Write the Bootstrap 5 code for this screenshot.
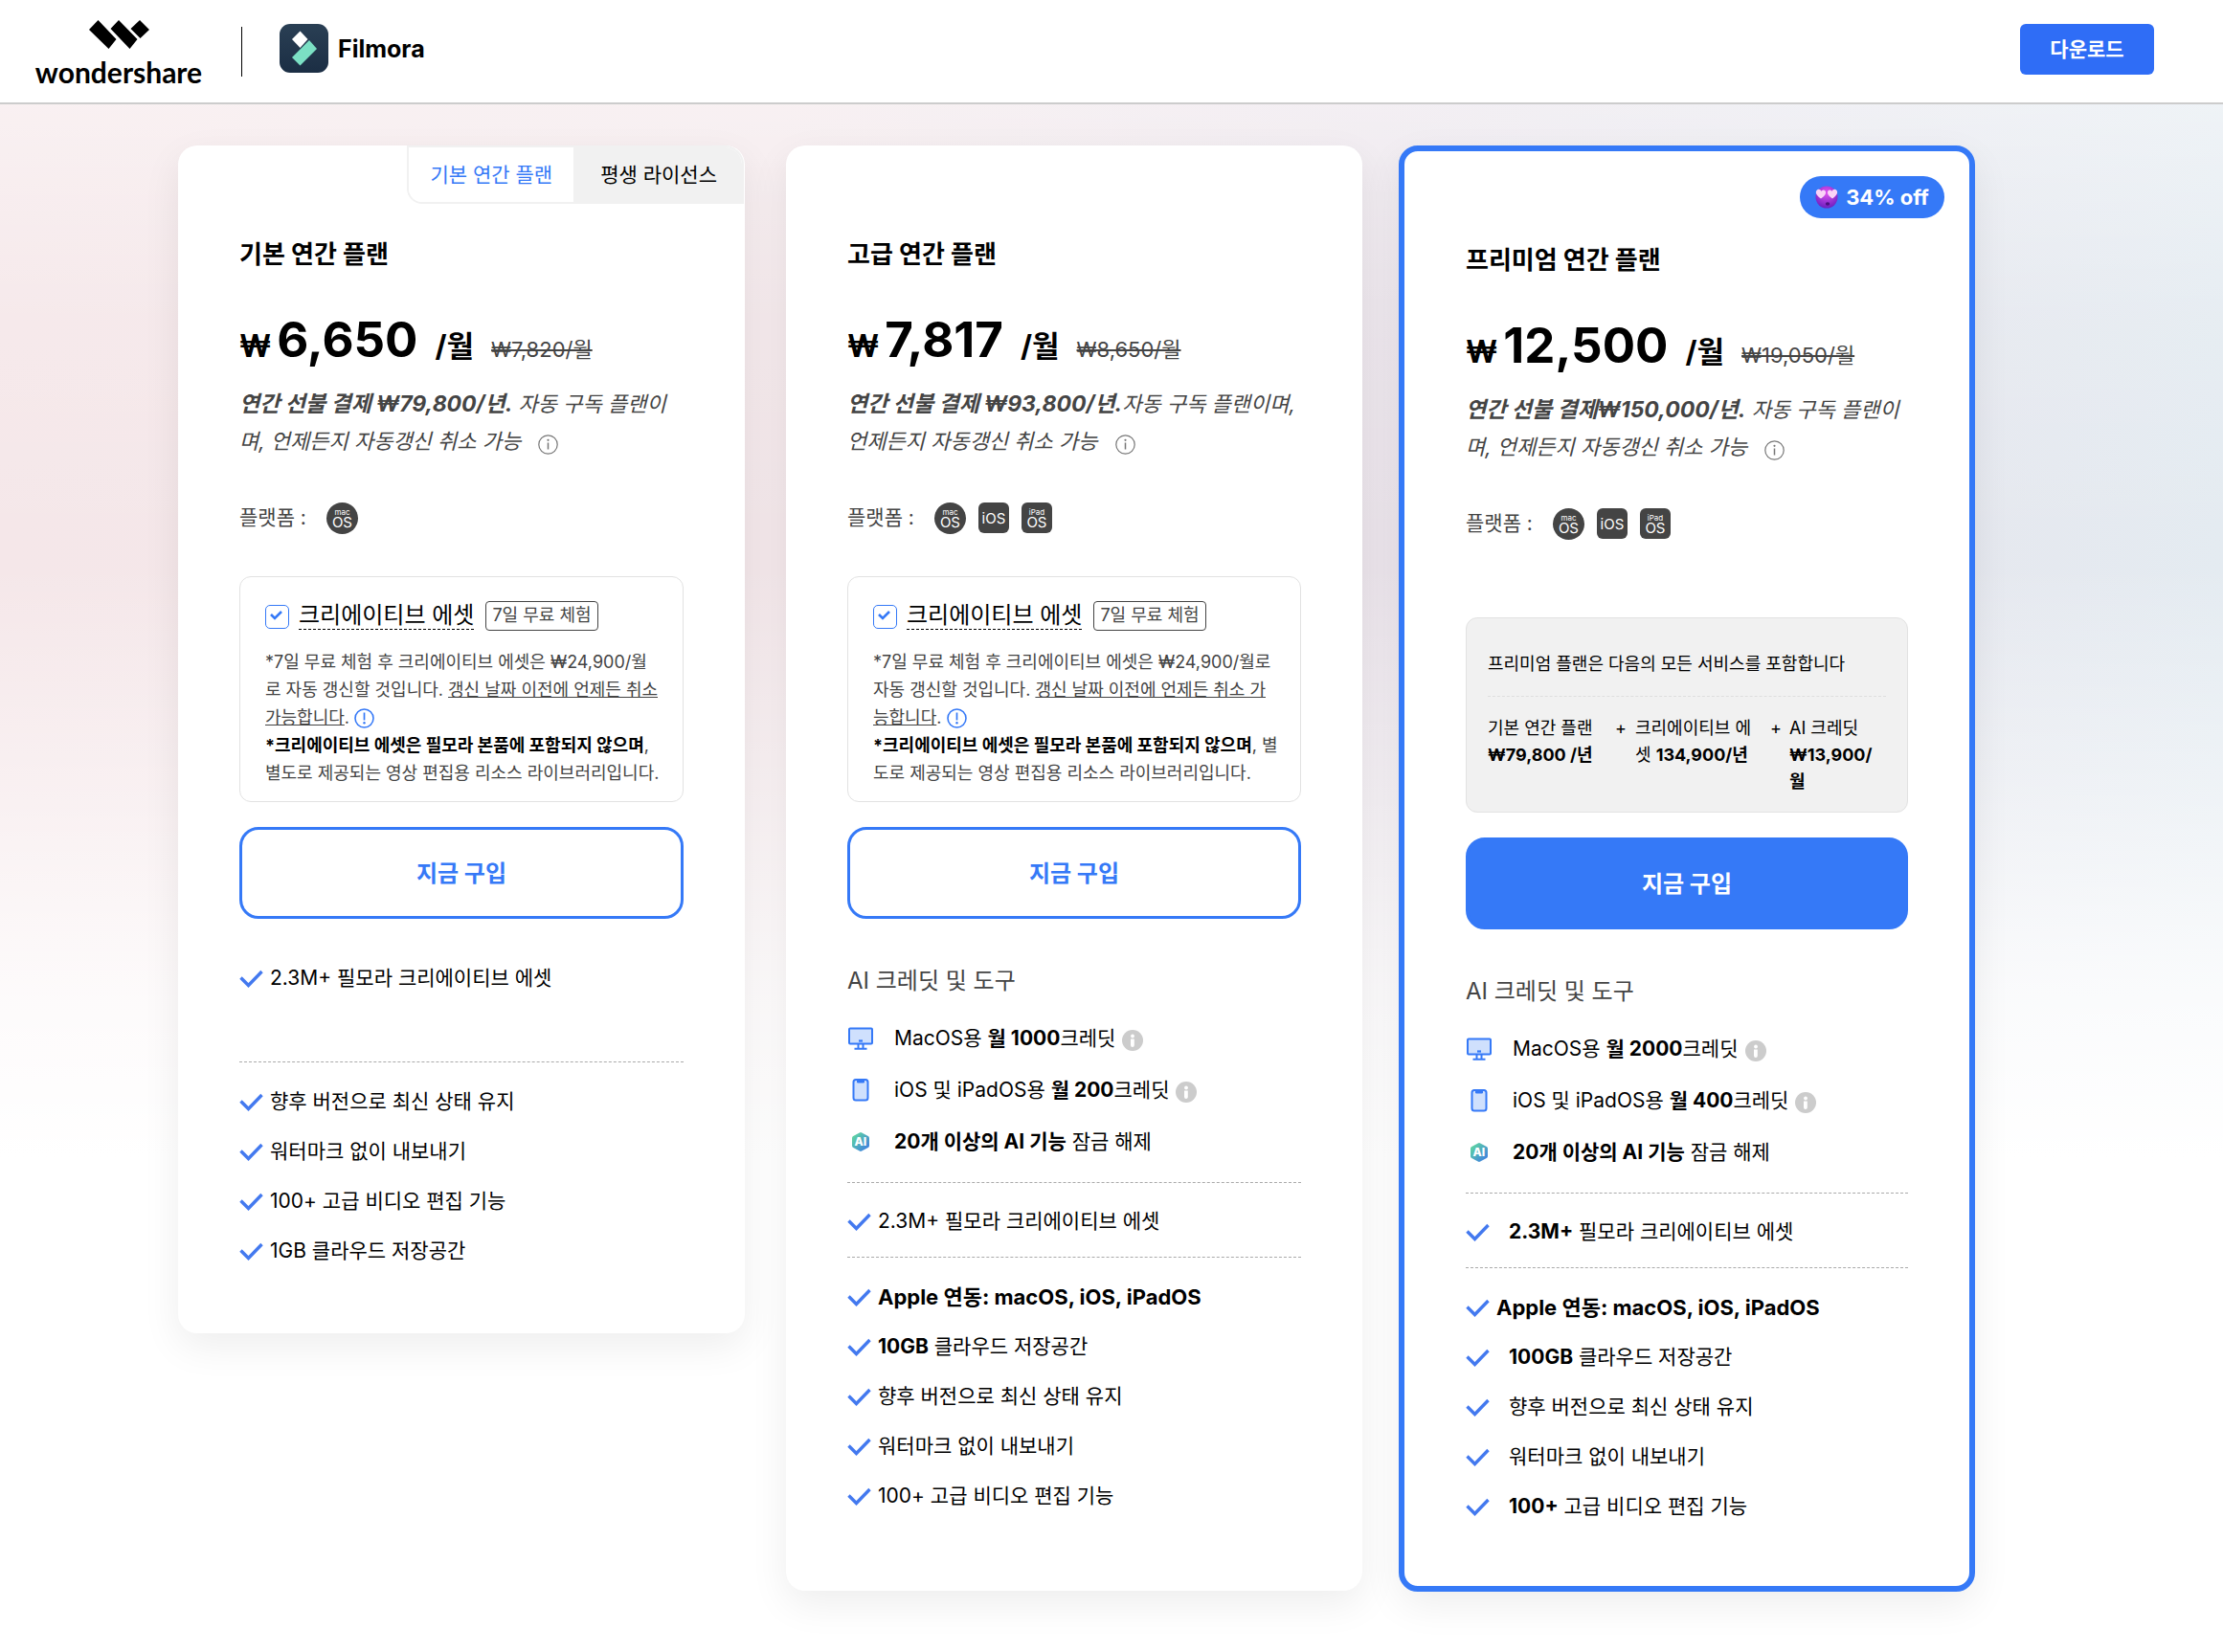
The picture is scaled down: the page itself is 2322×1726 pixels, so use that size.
<!DOCTYPE html>
<html lang="ko">
<head>
<meta charset="utf-8">
<meta name="viewport" content="width=device-width, initial-scale=1">
<title>Filmora 요금제</title>
<link href="https://cdn.jsdelivr.net/npm/bootstrap@5.3.0/dist/css/bootstrap.min.css" rel="stylesheet">
<style>
:root{--brand:#3579f7;--ink:#444}
body{font-family:Inter,"Noto Sans CJK KR",sans-serif;font-size:21px;line-height:30px;color:#000;background:#fff;word-break:break-all}
b,strong{font-weight:700}
svg{flex:none}
.site-header{height:109px;background:#fff;border-bottom:2px solid #ccc;padding:0 72px 0 40px}
.ws-logo{color:#000;width:168px;padding-top:21px;text-decoration:none;flex:none}
.ws-name{font-family:Lato,sans-serif;font-weight:700;font-size:30px;line-height:36px;margin-top:6px;white-space:nowrap}
.header-rule{flex:none;width:1px;height:52px;background:#000;margin:28px 39px 0 44px}
.product{color:#000;font-weight:700;font-size:25px;text-decoration:none;gap:10px;margin-top:25px}
.btn-download{width:140px;height:53px;margin-top:25px;background:#2f6df6;color:#fff;font-weight:700;font-size:21px;border-radius:6px;padding:0}
.btn-download:hover{background:#1f5de6;color:#fff}
.pricing{min-height:1617px;padding:43px 259px 62px 186px;
 background:linear-gradient(180deg,rgba(255,255,255,.4) 0,rgba(255,255,255,.1) 220px,rgba(255,255,255,0) 480px,rgba(255,255,255,.4) 720px,rgba(255,255,255,.8) 920px,#fff 1100px),
 linear-gradient(90deg,#f5e7e9 0,#f3e7ea 35%,#ebe4eb 62%,#e6e7ee 85%,#e4ebf1 100%)}
.plan-grid{display:grid;grid-template-columns:597fr 602fr 602fr;gap:38px;align-items:start}
.plan{background:#fff;border-radius:20px;padding:0 64px;box-shadow:0 14px 40px rgba(0,0,0,.07);min-width:0}
.plan-basic{margin-right:5px;padding-bottom:60px}
.plan-advanced{padding-bottom:73px}
.plan-premium{border:6px solid var(--brand);padding-bottom:57px}
.plan-top{height:96px;margin:0 -64px}
.plan-tabs{height:61px;border-radius:0 20px 0 16px;overflow:hidden;border:2px solid #f1f1f1;margin-right:1px}
.plan-tabs button{border:0;background:#fff;color:var(--brand);font-size:21px;padding:0 22px;height:57px;line-height:57px}
.plan-tabs button+button{background:#f1f1f1;color:#000;padding:0 26px 0 28px}
.off-badge{height:44px;width:151px;border-radius:22px;background:var(--brand);color:#fff;font-weight:700;font-size:22px;margin:26px 26px 0 0;gap:8px}
.plan-title{font-size:26px;line-height:36px;font-weight:700;margin:0 0 41px}
.price-row{height:60px;line-height:60px;margin-bottom:18px}
.price-unit{font-size:32px;font-weight:700}
.price-num{font-size:51px;font-weight:700;margin:0 18px 0 6px}
.price-per{font-size:31px;font-weight:700;margin-right:18px}
.price-old{font-size:22px;color:var(--ink)}
.plan-desc{font-size:22px;line-height:39px;font-style:italic;color:var(--ink);height:78px;margin:0 0 43px;white-space:nowrap}
.plan-desc b{font-size:23px}
.plan-desc svg{margin-left:12px;vertical-align:-6px}
.platforms{height:34px;color:var(--ink);margin-bottom:44px;gap:13px}
.platforms span{margin-right:8px}
.os-icon{width:32px;height:32px;border-radius:6px;background:#444;color:#fff;font-size:15px;line-height:13px;text-align:center;display:flex;flex-direction:column;align-items:center;justify-content:center;flex:none;word-break:normal}
.os-icon.os-round{width:33px;height:33px;border-radius:50%}
.os-icon small{font-size:8px;line-height:8px}
.offer{border:1px solid #e2e2e2;border-radius:12px;padding:24px 22px 15px 26px;font-size:18px;line-height:29px;color:var(--ink)}
.offer p{margin:0;white-space:nowrap;height:145px}
.offer p b{color:#000}
.offer p svg{vertical-align:-5px}
.offer-head{height:32px;margin-bottom:18px}
.offer-head input{appearance:none;width:25px;height:25px;border:1px solid var(--brand);border-radius:5px;margin:2px 10px 0 0;flex:none;background:#fff url("data:image/svg+xml,%3Csvg xmlns='http://www.w3.org/2000/svg' viewBox='0 0 23 23'%3E%3Cpath d='M5 9l4 4 7-7' fill='none' stroke='%233579f7' stroke-width='2.6'/%3E%3C/svg%3E")}
.offer-head label{font-size:24px;line-height:28px;color:#000;border-bottom:1px dashed #000;margin-right:12px}
.trial-tag{border:1px solid var(--ink);border-radius:4px;height:31px;line-height:28px;padding:0 6px}
.bundle{background:#f1f1f1;border:1px solid #e2e2e2;border-radius:12px;padding:34px 22px 17px;margin-top:81px;font-size:18px;line-height:28px}
.bundle p{margin:0;padding-bottom:19px;border-bottom:1px dashed #dedede}
.bundle-items{display:grid;grid-template-columns:133px 21px 141px 20px 1fr;padding-top:19px}
.btn-buy{width:100%;height:96px;border:3px solid var(--brand);border-radius:20px;color:var(--brand);background:#fff;font-size:24px;font-weight:700;margin-top:26px;padding:2px 0 0}
.btn-buy:hover,.plan-premium .btn-buy{background:var(--brand);color:#fff}
.plan-premium .platforms{margin-bottom:0}
.ai-heading{font-size:24px;line-height:36px;font-weight:400;color:var(--ink);margin:47px 0 15px}
.feature-list{list-style:none;margin:0;padding:0}
.feature-list li{height:52px;display:flex;align-items:center;white-space:pre}
.feature-list .check{width:25px;height:19px;margin-right:7px}
.feature-list .wide{margin-right:20px}
.feature-list.ai li{height:54px}
.feature-list .dev{width:28px;height:28px;margin-right:21px}
.feature-list .tip{margin:4px 0 0 7px}
.feature-list .apple{font-size:22px}
.dash{border-top:1px dashed #aaa}
.first-basic{margin-top:36px}
.dash-basic{margin:61px 0 15px}
.dash-one{margin:15px 0 14px}
.dash-two{margin:11px 0 15px}
</style>
</head>
<body>
<svg width="0" height="0" class="position-absolute" aria-hidden="true">
<defs>
<linearGradient id="gAi" x1="0" y1="0" x2="1" y2="1"><stop offset=".1" stop-color="#5fd6a0"/><stop offset=".9" stop-color="#3f80e0"/></linearGradient>
<linearGradient id="gIcon" x1="0" y1="0" x2="0" y2="1"><stop offset="0" stop-color="#2a3f54"/><stop offset="1" stop-color="#1b2e44"/></linearGradient>
<radialGradient id="gFace" cx=".5" cy=".3" r=".7"><stop offset="0" stop-color="#e352f0"/><stop offset="1" stop-color="#6d1fc0"/></radialGradient>
</defs>
<symbol id="check" viewBox="0 0 25 19"><path d="M1.5 8.500 9.500 16.500 23.500 2" fill="none" stroke="#4379ef" stroke-width="3.400"/></symbol>
<symbol id="info" viewBox="0 0 21 21"><circle cx="10.500" cy="10.500" r="9.700" fill="none" stroke="#777" stroke-width="1.200"/><path d="M10.500 8.500v7" stroke="#777" stroke-width="1.500"/><circle cx="10.500" cy="5.800" r="1.100" fill="#777"/></symbol>
<symbol id="warn" viewBox="0 0 21 21"><circle cx="10.500" cy="10.500" r="9.500" fill="none" stroke="#3579f7" stroke-width="1.600"/><path d="M10.500 4.500v8" stroke="#3579f7" stroke-width="1.700"/><circle cx="10.500" cy="15.300" r="1.200" fill="#3579f7"/></symbol>
<symbol id="tip" viewBox="0 0 22 22"><circle cx="11" cy="11" r="11" fill="#ccc"/><circle cx="11" cy="6.500" r="1.900" fill="#fff"/><path d="M9 9.500h3.800V16a1.900 1.900 0 0 1-3.800 0z" fill="#fff"/></symbol>
<symbol id="desk" viewBox="0 0 28 28"><rect x="2" y="3.500" width="24" height="16" rx="1" fill="#cfe0fd" stroke="#3579f7" stroke-width="2"/><path d="M11.500 20v5M16.500 20v5M7.500 24.800h13" stroke="#3579f7" stroke-width="2" fill="none"/><path d="M12 16.500h4" stroke="#3579f7" stroke-width="2.200"/></symbol>
<symbol id="phone" viewBox="0 0 28 28"><rect x="6.500" y="3" width="15" height="21.500" rx="2.500" fill="#cfe0fd" stroke="#3579f7" stroke-width="2"/><path d="M10 3h8v2.200q0 1.300-1.300 1.300h-5.400Q10 6.500 10 5.200z" fill="#3579f7"/></symbol>
</svg>

<header class="site-header d-flex align-items-start">
  <a href="#" class="ws-logo d-flex flex-column align-items-center">
    <svg width="63" height="30" viewBox="0 0 63 30" aria-hidden="true"><path d="M0 10 9.500 0 28.500 20 20.500 30zM22.500 9 31 0 50.500 20 42.500 30zM43.500 9 53 0 63 10 53.500 19z" fill="#000"/></svg>
    <span class="ws-name">wondershare</span>
  </a>
  <div class="header-rule"></div>
  <a href="#" class="product d-flex align-items-center">
    <svg width="51" height="51" viewBox="0 0 51 51" aria-hidden="true"><rect width="51" height="51" rx="11" fill="url(#gIcon)"/><path d="M21.500 7.500 29.500 16 21.500 25 13 16z" fill="#fff"/><path d="M31 17 39 26 21.500 43.500 13 35z" fill="#7be0c4"/></svg>
    <span>Filmora</span>
  </a>
  <button type="button" class="btn btn-download ms-auto">다운로드</button>
</header>

<main class="pricing">
 <div class="plan-grid">

  <section class="plan plan-basic">
    <div class="plan-top d-flex justify-content-end">
      <div class="plan-tabs d-flex" role="tablist"><button type="button" role="tab" aria-selected="true">기본 연간 플랜</button><button type="button" role="tab" aria-selected="false">평생 라이선스</button></div>
    </div>
    <h2 class="plan-title">기본 연간 플랜</h2>
    <div class="price-row d-flex align-items-baseline"><span class="price-unit">₩</span><span class="price-num">6,650</span><span class="price-per">/월</span><del class="price-old">₩7,820/월</del></div>
    <p class="plan-desc"><b>연간 선불 결제 ₩79,800/년.</b> 자동 구독 플랜이<br>며, 언제든지 자동갱신 취소 가능 <svg width="21" height="21"><use href="#info"/></svg></p>
    <div class="platforms d-flex align-items-center"><span>플랫폼 :</span><div class="os-icon os-round"><small>mac</small>OS</div></div>
    <div class="offer">
      <div class="offer-head d-flex align-items-center"><input type="checkbox" id="asset1" checked><label for="asset1">크리에이티브 에셋</label><span class="trial-tag">7일 무료 체험</span></div>
      <p>*7일 무료 체험 후 크리에이티브 에셋은 ₩24,900/월<br>로 자동 갱신할 것입니다. <u>갱신 날짜 이전에 언제든 취소<br>가능합니다</u>. <svg width="21" height="21"><use href="#warn"/></svg><br><b>*크리에이티브 에셋은 필모라 본품에 포함되지 않으며</b>,<br>별도로 제공되는 영상 편집용 리소스 라이브러리입니다.</p>
    </div>
    <button type="button" class="btn btn-buy">지금 구입</button>
    <ul class="feature-list"><li class="first-basic"><svg class="check"><use href="#check"/></svg>2.3M+ 필모라 크리에이티브 에셋</li></ul>
    <div class="dash dash-basic"></div>
    <ul class="feature-list">
      <li><svg class="check"><use href="#check"/></svg>향후 버전으로 최신 상태 유지</li>
      <li><svg class="check"><use href="#check"/></svg>워터마크 없이 내보내기</li>
      <li><svg class="check"><use href="#check"/></svg>100+ 고급 비디오 편집 기능</li>
      <li><svg class="check"><use href="#check"/></svg>1GB 클라우드 저장공간</li>
    </ul>
  </section>

  <section class="plan plan-advanced">
    <div class="plan-top"></div>
    <h2 class="plan-title">고급 연간 플랜</h2>
    <div class="price-row d-flex align-items-baseline"><span class="price-unit">₩</span><span class="price-num">7,817</span><span class="price-per">/월</span><del class="price-old">₩8,650/월</del></div>
    <p class="plan-desc"><b>연간 선불 결제 ₩93,800/년.</b>자동 구독 플랜이며,<br>언제든지 자동갱신 취소 가능 <svg width="21" height="21"><use href="#info"/></svg></p>
    <div class="platforms d-flex align-items-center"><span>플랫폼 :</span><div class="os-icon os-round"><small>mac</small>OS</div><div class="os-icon">iOS</div><div class="os-icon"><small>iPad</small>OS</div></div>
    <div class="offer">
      <div class="offer-head d-flex align-items-center"><input type="checkbox" id="asset2" checked><label for="asset2">크리에이티브 에셋</label><span class="trial-tag">7일 무료 체험</span></div>
      <p>*7일 무료 체험 후 크리에이티브 에셋은 ₩24,900/월로<br>자동 갱신할 것입니다. <u>갱신 날짜 이전에 언제든 취소 가<br>능합니다</u>. <svg width="21" height="21"><use href="#warn"/></svg><br><b>*크리에이티브 에셋은 필모라 본품에 포함되지 않으며</b>, 별<br>도로 제공되는 영상 편집용 리소스 라이브러리입니다.</p>
    </div>
    <button type="button" class="btn btn-buy">지금 구입</button>
    <h3 class="ai-heading">AI 크레딧 및 도구</h3>
    <ul class="feature-list ai">
      <li><svg class="dev"><use href="#desk"/></svg>MacOS용 <b>월 1000</b>크레딧<svg class="tip" width="22" height="22"><use href="#tip"/></svg></li>
      <li><svg class="dev"><use href="#phone"/></svg>iOS 및 iPadOS용 <b>월 200</b>크레딧<svg class="tip" width="22" height="22"><use href="#tip"/></svg></li>
      <li><svg class="dev" viewBox="0 0 28 28"><path d="M14 4q.6 0 1.200.4l6.600 3.500q1.200.7 1.200 2v8.200q0 1.300-1.200 2l-6.600 3.500q-1.200.7-2.400 0l-6.600-3.500q-1.200-.7-1.200-2V9.900q0-1.300 1.200-2l6.600-3.500Q13.400 4 14 4z" fill="url(#gAi)"/><text x="13.800" y="18.200" font-size="12" font-weight="800" text-anchor="middle" fill="#fff">AI</text></svg><b>20개 이상의 AI 기능</b> 잠금 해제</li>
    </ul>
    <div class="dash dash-one"></div>
    <ul class="feature-list"><li><svg class="check"><use href="#check"/></svg>2.3M+ 필모라 크리에이티브 에셋</li></ul>
    <div class="dash dash-two"></div>
    <ul class="feature-list">
      <li class="apple"><svg class="check"><use href="#check"/></svg><b>Apple 연동: macOS, iOS, iPadOS</b></li>
      <li><svg class="check"><use href="#check"/></svg><b>10GB</b> 클라우드 저장공간</li>
      <li><svg class="check"><use href="#check"/></svg>향후 버전으로 최신 상태 유지</li>
      <li><svg class="check"><use href="#check"/></svg>워터마크 없이 내보내기</li>
      <li><svg class="check"><use href="#check"/></svg>100+ 고급 비디오 편집 기능</li>
    </ul>
  </section>

  <section class="plan plan-premium">
    <div class="plan-top d-flex justify-content-end">
      <div class="off-badge d-flex align-items-center justify-content-center"><svg width="24" height="24" viewBox="0 0 24 24" aria-hidden="true"><circle cx="12" cy="12" r="11.500" fill="url(#gFace)"/><path d="M6 13.500C1 10 0 7 1.500 5S5.500 3.800 6.500 5.800C8 3.800 10.500 4 11 6.500S9.500 11 6 13.500zM18 13.500C14.500 11 12.500 9 13 6.500s3-2.700 4.500-.7c1-2 3.500-2.800 5-.8S23 10 18 13.500z" fill="#fbd3f7"/><ellipse cx="13" cy="19" rx="2.200" ry="1.800" fill="#4b1080"/></svg><span>34% off</span></div>
    </div>
    <h2 class="plan-title">프리미엄 연간 플랜</h2>
    <div class="price-row d-flex align-items-baseline"><span class="price-unit">₩</span><span class="price-num">12,500</span><span class="price-per">/월</span><del class="price-old">₩19,050/월</del></div>
    <p class="plan-desc"><b>연간 선불 결제₩150,000/년.</b> 자동 구독 플랜이<br>며, 언제든지 자동갱신 취소 가능 <svg width="21" height="21"><use href="#info"/></svg></p>
    <div class="platforms d-flex align-items-center"><span>플랫폼 :</span><div class="os-icon os-round"><small>mac</small>OS</div><div class="os-icon">iOS</div><div class="os-icon"><small>iPad</small>OS</div></div>
    <div class="bundle">
      <p>프리미엄 플랜은 다음의 모든 서비스를 포함합니다</p>
      <div class="bundle-items"><div>기본 연간 플랜<br><b>₩79,800 /년</b></div><div>+</div><div>크리에이티브 에<br>셋 <b>134,900/년</b></div><div>+</div><div>AI 크레딧<br><b>₩13,900/<br>월</b></div></div>
    </div>
    <button type="button" class="btn btn-buy">지금 구입</button>
    <h3 class="ai-heading">AI 크레딧 및 도구</h3>
    <ul class="feature-list ai">
      <li><svg class="dev"><use href="#desk"/></svg>MacOS용 <b>월 2000</b>크레딧<svg class="tip" width="22" height="22"><use href="#tip"/></svg></li>
      <li><svg class="dev"><use href="#phone"/></svg>iOS 및 iPadOS용 <b>월 400</b>크레딧<svg class="tip" width="22" height="22"><use href="#tip"/></svg></li>
      <li><svg class="dev" viewBox="0 0 28 28"><path d="M14 4q.6 0 1.200.4l6.600 3.500q1.200.7 1.200 2v8.200q0 1.300-1.200 2l-6.600 3.500q-1.200.7-2.400 0l-6.600-3.500q-1.200-.7-1.200-2V9.900q0-1.300 1.200-2l6.600-3.500Q13.400 4 14 4z" fill="url(#gAi)"/><text x="13.800" y="18.200" font-size="12" font-weight="800" text-anchor="middle" fill="#fff">AI</text></svg><b>20개 이상의 AI 기능</b> 잠금 해제</li>
    </ul>
    <div class="dash dash-one"></div>
    <ul class="feature-list"><li><svg class="check wide"><use href="#check"/></svg><b>2.3M+</b> 필모라 크리에이티브 에셋</li></ul>
    <div class="dash dash-two"></div>
    <ul class="feature-list">
      <li class="apple"><svg class="check"><use href="#check"/></svg><b>Apple 연동: macOS, iOS, iPadOS</b></li>
      <li><svg class="check wide"><use href="#check"/></svg><b>100GB</b> 클라우드 저장공간</li>
      <li><svg class="check wide"><use href="#check"/></svg>향후 버전으로 최신 상태 유지</li>
      <li><svg class="check wide"><use href="#check"/></svg>워터마크 없이 내보내기</li>
      <li><svg class="check wide"><use href="#check"/></svg><b>100+</b> 고급 비디오 편집 기능</li>
    </ul>
  </section>
 </div>
</main>
<script src="https://cdn.jsdelivr.net/npm/bootstrap@5.3.0/dist/js/bootstrap.bundle.min.js"></script>
</body>
</html>
